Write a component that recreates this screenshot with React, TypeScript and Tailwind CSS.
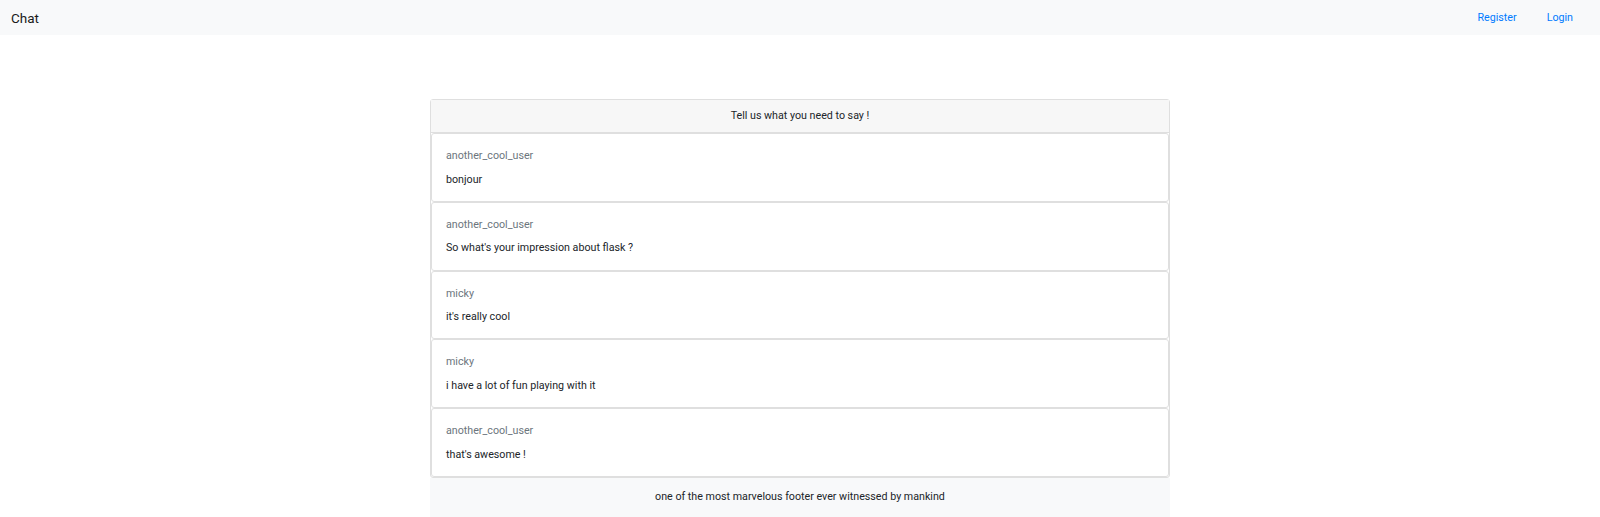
const messages = [
  { user: 'another_cool_user', text: 'bonjour' },
  { user: 'another_cool_user', text: "So what's your impression about flask ?" },
  { user: 'micky', text: "it's really cool" },
  { user: 'micky', text: 'i have a lot of fun playing with it' },
  { user: 'another_cool_user', text: "that's awesome !" },
];

function Navbar() {
  return (
    <nav className="flex h-[35px] items-center justify-between bg-[#f8f9fa] pl-[11px] pr-[27px]">
      <a className="text-[13.5px] leading-[20px] text-[#1a1a1a]">Chat</a>
      <div className="flex items-center gap-[30px] text-[10.7px] leading-[16px] text-[#007bff]">
        <a>Register</a>
        <a>Login</a>
      </div>
    </nav>
  );
}

function MessageCard({ user, text }: { user: string; text: string }) {
  return (
    <div className="h-[68.8px] rounded-[3px] border border-[#dfdfdf] bg-white px-[14px] py-[14px]">
      <div className="leading-[16px] text-[#6c757d]">{user}</div>
      <p className="mt-[7.5px] leading-[16px] text-[#212529]">{text}</p>
    </div>
  );
}

export default function App() {
  return (
    <div
      className="min-h-[517px] bg-white text-[10.7px] text-[#212529]"
      style={{ fontFamily: 'Roboto, "Liberation Sans", sans-serif' }}
    >
      <Navbar />
      <main className="mx-auto mt-[64px] w-[740px]">
        <div className="rounded-[3px] border border-[#dfdfdf] bg-white">
          <div className="border-b border-[#dfdfdf] bg-[#f7f7f7] py-[8px] text-center leading-[16px]">
            Tell us what you need to say !
          </div>
          {messages.map((m, i) => (
            <MessageCard key={i} user={m.user} text={m.text} />
          ))}
        </div>
        <footer className="bg-[#f8f9fa] pb-[16px] pt-[11px] text-center leading-[16px]">
          one of the most marvelous footer ever witnessed by mankind
        </footer>
      </main>
    </div>
  );
}
